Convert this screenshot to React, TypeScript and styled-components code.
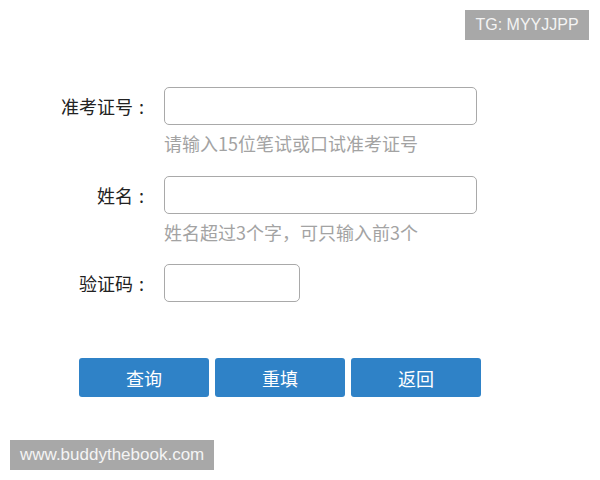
import { createGlobalStyle, styled } from 'styled-components';

const GlobalStyle = createGlobalStyle`
    html, body {
        margin: 0;
        padding: 0;
        background: #ffffff;
    }
    body {
        font-family: 'Noto Sans CJK SC', 'Noto Sans', sans-serif;
    }
`;

const Page = styled.div`
    position: relative;
    width: 600px;
    height: 480px;
    overflow: hidden;
    background: #ffffff;
`;

const Form = styled.div`
    display: flex;
    flex-direction: column;
    padding-top: 87px;
`;

const Row = styled.div<{ $gap: number }>`
    display: grid;
    grid-template-columns: 147px 1fr;
    column-gap: 17px;
    margin-bottom: ${(p) => p.$gap}px;
`;

const Label = styled.label`
    height: 38px;
    display: flex;
    align-items: center;
    justify-content: flex-end;
    font-size: 18px;
    color: #222;
    white-space: nowrap;
`;

const Colon = styled.span`
    margin-left: 6px;
    width: 8px;
`;

const Field = styled.div`
    display: flex;
    flex-direction: column;
`;

const TextInput = styled.input<{ $width: number }>`
    box-sizing: border-box;
    width: ${(p) => p.$width}px;
    height: 38px;
    border: 1px solid #a9a9a9;
    border-radius: 5px;
    background: #fff;
    outline: none;
    padding: 0 8px;
    font-size: 16px;
`;

const Hint = styled.div`
    margin-top: 5px;
    height: 26px;
    line-height: 26px;
    font-size: 18px;
    color: #a3a3a3;
    white-space: nowrap;
`;

const ButtonRow = styled.div`
    display: flex;
    gap: 6px;
    padding-left: 79px;
`;

const ActionButton = styled.button`
    width: 130px;
    height: 39px;
    border: none;
    border-radius: 3px;
    background: #2f82c7;
    color: #fff;
    font-family: 'Noto Sans CJK SC', sans-serif;
    font-size: 18px;
    cursor: pointer;
`;

const Tag = styled.div<{ $size: number }>`
    position: absolute;
    height: 30px;
    line-height: 30px;
    padding: 0 10px;
    background: #a8a8a8;
    color: #f4f4f4;
    font-family: 'Liberation Sans', Arial, sans-serif;
    font-size: ${(p) => p.$size}px;
`;

const TopTag = styled(Tag)`
    top: 10px;
    right: 11px;
    width: 104px;
    text-align: center;
`;

const BottomTag = styled(Tag)`
    left: 10px;
    bottom: 10px;
`;

export default function App() {
    return (
        <Page>
            <GlobalStyle />
            <Form>
                <Row $gap={20}>
                    <Label>准考证号<Colon>:</Colon></Label>
                    <Field>
                        <TextInput $width={313} />
                        <Hint>请输入15位笔试或口试准考证号</Hint>
                    </Field>
                </Row>
                <Row $gap={19}>
                    <Label>姓名<Colon>:</Colon></Label>
                    <Field>
                        <TextInput $width={313} />
                        <Hint>姓名超过3个字，可只输入前3个</Hint>
                    </Field>
                </Row>
                <Row $gap={56}>
                    <Label>验证码<Colon>:</Colon></Label>
                    <Field>
                        <TextInput $width={136} />
                    </Field>
                </Row>
                <ButtonRow>
                    <ActionButton>查询</ActionButton>
                    <ActionButton>重填</ActionButton>
                    <ActionButton>返回</ActionButton>
                </ButtonRow>
            </Form>
            <TopTag $size={16}>TG: MYYJJPP</TopTag>
            <BottomTag $size={17}>www.buddythebook.com</BottomTag>
        </Page>
    );
}
